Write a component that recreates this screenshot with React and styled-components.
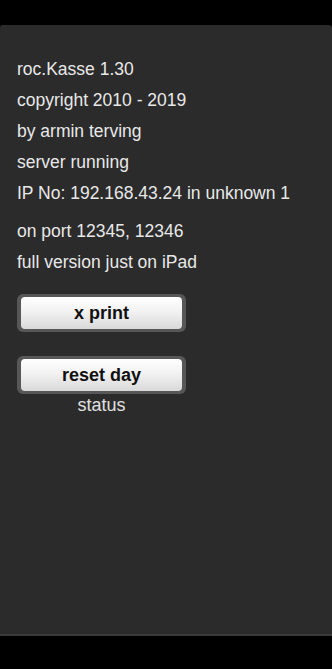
import React from "react";
import styled, { createGlobalStyle } from "styled-components";

const Global = createGlobalStyle`
  html, body {
    margin: 0;
    padding: 0;
    background: #000;
  }
  body {
    font-family: "Liberation Sans", Arial, sans-serif;
  }
`;

const Screen = styled.div`
  width: 332px;
  height: 669px;
  background: #000;
  padding-top: 25px;
  box-sizing: border-box;
`;

const Panel = styled.div`
  height: 611px;
  background: #2b2b2b;
  border-radius: 3px 3px 0 0;
  border-bottom: 2px solid #3a3a3a;
  box-sizing: border-box;
  padding: 29px 0 0 17px;
`;

const Line = styled.div`
  color: #e8e8e8;
  font-size: 17.5px;
  line-height: 31px;
  margin-top: ${(p) => (p.gap ? p.gap : 0)}px;
  white-space: nowrap;
`;

const Buttons = styled.div`
  width: 169px;
  margin-top: 16px;
  display: flex;
  flex-direction: column;
  align-items: center;
`;

const Frame = styled.div`
  width: 169px;
  height: 38px;
  box-sizing: border-box;
  padding: 3px 4px 3px 4px;
  background: #575757;
  border-radius: 6px;
  margin-top: ${(p) => (p.gap ? p.gap : 0)}px;
`;

const Btn = styled.button`
  width: 100%;
  height: 100%;
  border: none;
  border-radius: 4px;
  background: linear-gradient(#ffffff 0%, #f2f2f2 45%, #d9d9d9 100%);
  font-family: "Liberation Sans", Arial, sans-serif;
  font-weight: bold;
  font-size: 18px;
  color: #111;
  padding: 0;
  cursor: pointer;
`;

const Status = styled.div`
  color: #e0e0e0;
  font-size: 18px;
  line-height: 20px;
  margin-top: 1px;
`;

export default function App() {
  return (
    <Screen>
      <Global />
      <Panel>
        <Line>roc.Kasse 1.30</Line>
        <Line>copyright 2010 - 2019</Line>
        <Line>by armin terving</Line>
        <Line>server running</Line>
        <Line>IP No: 192.168.43.24 in unknown 1</Line>
        <Line gap={7}>on port 12345, 12346</Line>
        <Line>full version just on iPad</Line>
        <Buttons>
          <Frame>
            <Btn>x print</Btn>
          </Frame>
          <Frame gap={24}>
            <Btn>reset day</Btn>
          </Frame>
          <Status>status</Status>
        </Buttons>
      </Panel>
    </Screen>
  );
}
